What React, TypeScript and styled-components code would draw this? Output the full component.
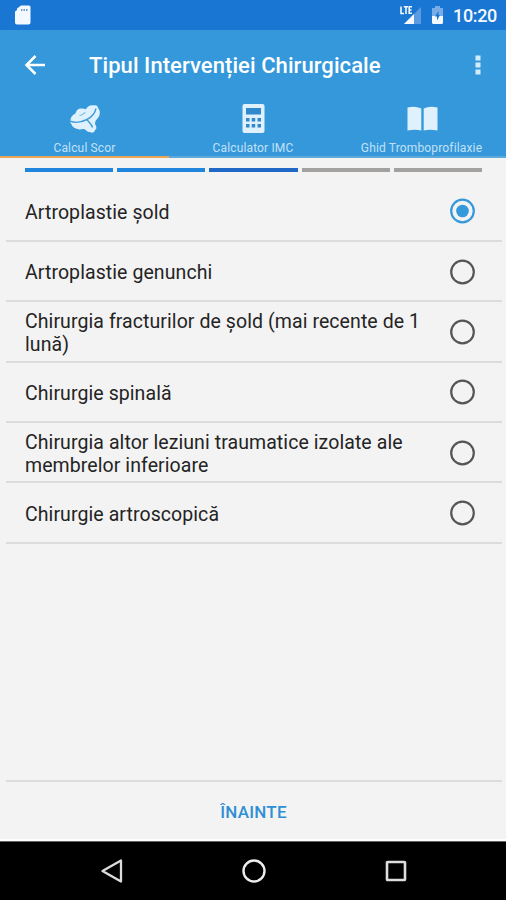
import React, { useState } from "react";
import styled, { createGlobalStyle } from "styled-components";

const GlobalStyle = createGlobalStyle`
  * { box-sizing: border-box; }
  body { margin: 0; background: #f3f3f3; font-family: Roboto, "Noto Sans", sans-serif; }
  button { font: inherit; border: 0; padding: 0; background: none; color: inherit; cursor: pointer; }
  svg { display: block; flex: none; }
`;

const Screen = styled.div`
  width: 506px;
  height: 900px;
  display: flex;
  flex-direction: column;
  overflow: hidden;
  background: #f3f3f3;
`;

const StatusBar = styled.div`
  height: 30px;
  flex: none;
  display: flex;
  align-items: center;
  padding: 0 9px 0 15px;
  background: #1976d2;
  color: #f4f9ff;
`;

const StatusGroup = styled.div`
  margin-left: auto;
  display: flex;
  align-items: center;
  gap: 9px;
`;

const Clock = styled.span`
  width: 44px;
  padding-top: 2px;
  font-size: 18px;
  font-weight: 500;
  line-height: 20px;
  letter-spacing: -0.35px;
  white-space: nowrap;
`;

const AppBar = styled.header`
  height: 70px;
  flex: none;
  display: flex;
  align-items: center;
  padding: 0 24px;
  background: #3498db;
  color: #fff;
`;

const Title = styled.h1`
  margin: 0 auto 0 42px;
  padding-top: 1px;
  font-size: 22px;
  line-height: 28px;
  font-weight: 500;
  letter-spacing: 0.07px;
  white-space: nowrap;
`;

const Tabs = styled.nav`
  height: 58px;
  flex: none;
  display: grid;
  grid-template-columns: 169px 168px 169px;
  background: #3498db;
`;

const Tab = styled.button<{ $active?: boolean }>`
  display: flex;
  flex-direction: column;
  align-items: center;
  border-bottom: 2px solid ${(p) => (p.$active ? "#e9a757" : "#5ea9dc")};
  color: #dff1fd;
`;

const TabIcon = styled.span`
  height: 37px;
  display: flex;
  align-items: center;
`;

const TabLabel = styled.span`
  height: 19px;
  padding-top: 4px;
  font-size: 12px;
  line-height: 14px;
  letter-spacing: 0.15px;
  white-space: nowrap;
  color: #c3e1f6;
`;

const Steps = styled.div`
  flex: none;
  display: grid;
  grid-template-columns: repeat(5, 1fr);
  gap: 4px;
  height: 23.5px;
  padding: 10px 24px 10px 25px;
`;

const Step = styled.span<{ $state: "done" | "current" | "todo" }>`
  height: 3.5px;
  background: ${(p) => ({ done: "#2085dc", current: "#2068c5", todo: "#a2a1a0" })[p.$state]};
`;

const List = styled.div`
  flex: 1;
  margin: 0 4px 0 6px;
  border-bottom: 2px solid #dcdcdc;
`;

const Row = styled.button`
  width: 100%;
  height: 60.4px;
  display: flex;
  align-items: center;
  padding: 1px 27px 0 19px;
  border-bottom: 2px solid #dcdcdc;
  text-align: left;
`;

const RowLabel = styled.span`
  width: 405px;
  margin-right: auto;
  padding-top: 2px;
  color: #242424;
  font-size: 19.5px;
  line-height: 23px;
  letter-spacing: 0.08px;
`;

const Footer = styled.footer`
  height: 59px;
  flex: none;
  display: flex;
  align-items: center;
  justify-content: center;
  border-bottom: 2px solid #fdfdfd;
`;

const NextButton = styled.button`
  padding: 2px 0 0 1px;
  font-size: 17px;
  line-height: 24px;
  letter-spacing: 0.25px;
  font-weight: 500;
  color: #2f8fd3;
`;

const NavBar = styled.div`
  height: 59px;
  flex: none;
  display: grid;
  grid-template-columns: 26px 26px 26px;
  column-gap: 116px;
  justify-content: center;
  align-items: center;
  padding-left: 2px;
  background: #000;
  border-top: 1px solid #666;
`;

const SdCard = () => (
  <svg width="16" height="20" viewBox="0 0 16 20">
    <path d="M6 .5H14Q15.500.5 15.500 2V17.500Q15.500 19.500 13.500 19.500H2Q0 19.500 0 17.500V6.500L2 5V3.500Z" fill="#f4f9ff" />
    <path d="M6 4h1.500v2H6zM8.500 4H10v2H8.500zM11 4h1.500v2H11z" fill="#6a9fdc" />
  </svg>
);

const LteSignal = () => (
  <svg width="23" height="20" viewBox="0 0 23 20">
    <path d="M22 2V19H5Z" fill="#5c9be0" />
    <path d="M15 9V19H5Z" fill="#f4f9ff" />
    <path d="M2 1.500V8.500H5M4.800 1.800H9M7 1.800V9M13 1.800H10.200V8.300H13M10.200 5H12.500" fill="none" stroke="#f4f9ff" strokeWidth="1.600" />
  </svg>
);

const Battery = () => (
  <svg width="13" height="20" viewBox="0 0 13 20">
    <path d="M4 1H9V3H12V11H1V3H4Z" fill="#78ace6" />
    <path d="M1 11H12V17.500Q12 19 10.500 19H2.500Q1 19 1 17.500Z" fill="#f4f9ff" />
    <path d="M7.500 6L4 11.500H6V15.500L9 10H7.500Z" fill="#1976d2" />
  </svg>
);

const BackArrow = () => (
  <svg width="23" height="22" viewBox="0 0 23 22">
    <path d="M21 11H3M11.500 2L2.500 11L11.500 20" fill="none" stroke="#fff" strokeWidth="2.500" />
  </svg>
);

const More = () => (
  <svg width="8" height="22" viewBox="0 0 8 22">
    <path d="M1.500 1.500h5v5h-5zM1.500 8.500h5v5h-5zM1.500 15.500h5v5h-5z" fill="#d4ebfa" />
  </svg>
);

const Bone = () => (
  <svg width="32" height="30" viewBox="0 0 32 30">
    <path
      d="M1.500 16C2 12 5 10 6.500 9.500C7 6 10 4 13 4.500C15 4.500 16 5.500 17 5C18.500 2 22 .5 25 1.500C27 .8 29 2 29 4C32 7 31 12 28.500 14.500C26 17 25.500 19 26.500 21C28 23.500 27.500 25.500 26 26C25.500 28.500 23 29.500 21 28C18.500 28.500 17.500 26.500 16 25.500C13 24 12 26.500 9 25C5 24.500 2.500 22 2.500 20C1.200 19 1 17.500 1.500 16Z"
      fill="#dff1fd"
    />
    <path
      d="M1 17.200C7 19.500 13 18 18 15.500C22 13.500 26 9 27 4.500M18 15.500C19 18 22.500 19.500 23.500 23.500"
      fill="none"
      stroke="#3c9bdc"
      strokeWidth="1.400"
    />
    <path d="M10.500 11.500C13.500 11.500 14.500 9 16.500 8.500" fill="none" stroke="#8fc6ec" strokeWidth="1.400" />
  </svg>
);

const Calculator = () => (
  <svg width="24" height="31" viewBox="0 0 24 31">
    <rect x="1.500" y="1" width="22" height="29" rx="2" fill="#dff1fd" />
    <path d="M5 5h15v6.500H5zM5 15h3.500v3.500H5zM10.700 15h3.500v3.500h-3.500zM16.500 15H20v3.500h-3.500zM5 21h3.500v3.500H5zM10.700 21h3.500v3.500h-3.500zM16.500 21H20v3.500h-3.500z" fill="#3089cc" />
  </svg>
);

const Book = () => (
  <svg width="32" height="26" viewBox="0 0 32 26">
    <path d="M1.500 1.500Q9-.5 15.300 2.500V24.500Q9 23 1.500 24.500ZM17.700 2.500Q23.500-.5 31.500 1.500V24.500Q23.500 23 17.700 24.500Z" fill="#dff1fd" />
  </svg>
);

const Radio = ({ checked }: { checked: boolean }) => (
  <svg width="26" height="26" viewBox="0 0 26 26">
    <circle cx="13.500" cy="13" r="11.300" fill="none" stroke={checked ? "#3498db" : "#555"} strokeWidth="2.200" />
    {checked && <circle cx="13.500" cy="13" r="6.300" fill="#3498db" />}
  </svg>
);

const options = [
  "Artroplastie șold",
  "Artroplastie genunchi",
  "Chirurgia fracturilor de șold (mai recente de 1 lună)",
  "Chirurgie spinală",
  "Chirurgia altor leziuni traumatice izolate ale membrelor inferioare",
  "Chirurgie artroscopică",
];

const steps = ["done", "done", "current", "todo", "todo"] as const;

export default function App() {
  const [selected, setSelected] = useState(0);
  return (
    <>
      <GlobalStyle />
      <Screen>
        <StatusBar>
          <SdCard />
          <StatusGroup>
            <LteSignal />
            <Battery />
            <Clock>10:20</Clock>
          </StatusGroup>
        </StatusBar>
        <AppBar>
          <BackArrow />
          <Title>Tipul Intervenției Chirurgicale</Title>
          <More />
        </AppBar>
        <Tabs>
          <Tab $active>
            <TabIcon><Bone /></TabIcon>
            <TabLabel>Calcul Scor</TabLabel>
          </Tab>
          <Tab>
            <TabIcon><Calculator /></TabIcon>
            <TabLabel>Calculator IMC</TabLabel>
          </Tab>
          <Tab>
            <TabIcon><Book /></TabIcon>
            <TabLabel>Ghid Tromboprofilaxie</TabLabel>
          </Tab>
        </Tabs>
        <Steps>
          {steps.map((state, i) => <Step key={i} $state={state} />)}
        </Steps>
        <List>
          {options.map((option, i) => (
            <Row key={option} onClick={() => setSelected(i)}>
              <RowLabel>{option}</RowLabel>
              <Radio checked={selected === i} />
            </Row>
          ))}
        </List>
        <Footer>
          <NextButton>ÎNAINTE</NextButton>
        </Footer>
        <NavBar>
          <svg width="26" height="26" viewBox="0 0 26 26">
            <path d="M22 2.500V23.500L3.500 13Z" fill="none" stroke="#ddd" strokeWidth="2.300" strokeLinejoin="round" />
          </svg>
          <svg width="26" height="26" viewBox="0 0 26 26">
            <circle cx="13" cy="13" r="10.500" fill="none" stroke="#eee" strokeWidth="2.400" />
          </svg>
          <svg width="26" height="26" viewBox="0 0 26 26">
            <rect x="4" y="4" width="18" height="18" rx=".5" fill="none" stroke="#ddd" strokeWidth="2.600" />
          </svg>
        </NavBar>
      </Screen>
    </>
  );
}
